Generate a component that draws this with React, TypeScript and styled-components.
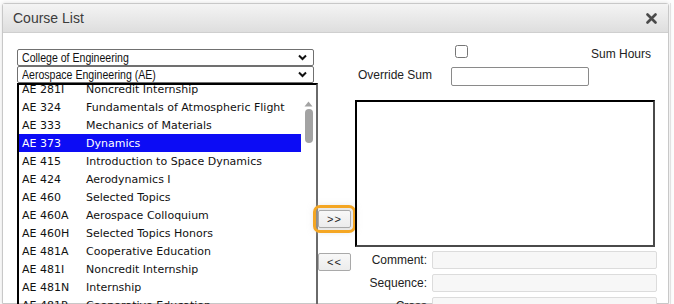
import React from 'react';
import styled, { createGlobalStyle } from 'styled-components';

const GlobalStyle = createGlobalStyle`
  html, body {
    margin: 0;
    padding: 0;
    background: #ffffff;
    overflow: hidden;
  }
`;

interface Course {
  code: string;
  name: string;
}

const courses: Course[] = [
  { code: 'AE 281I', name: 'Noncredit Internship' },
  { code: 'AE 324', name: 'Fundamentals of Atmospheric Flight' },
  { code: 'AE 333', name: 'Mechanics of Materials' },
  { code: 'AE 373', name: 'Dynamics' },
  { code: 'AE 415', name: 'Introduction to Space Dynamics' },
  { code: 'AE 424', name: 'Aerodynamics I' },
  { code: 'AE 460', name: 'Selected Topics' },
  { code: 'AE 460A', name: 'Aerospace Colloquium' },
  { code: 'AE 460H', name: 'Selected Topics Honors' },
  { code: 'AE 481A', name: 'Cooperative Education' },
  { code: 'AE 481I', name: 'Noncredit Internship' },
  { code: 'AE 481N', name: 'Internship' },
  { code: 'AE 481P', name: 'Cooperative Education' },
];

const selected = 'AE 373';

const Chevron = () => (
  <svg width="9" height="7" viewBox="0 0 9 7">
    <polyline points="1,1.5 4.5,5 8,1.5" fill="none" stroke="#111" strokeWidth="2" />
  </svg>
);

const CloseIcon = () => (
  <svg width="11" height="11" viewBox="0 0 11 11">
    <path d="M1.5 1.5 L9.5 9.5 M9.5 1.5 L1.5 9.5" stroke="#4a4a4a" strokeWidth="2.6" strokeLinecap="round" />
  </svg>
);

export default function App() {
  return (
    <>
      <GlobalStyle />
      <Page>
        <Dialog>
          <TitleBar>
            <Title>Course List</Title>
            <CloseIcon />
          </TitleBar>
          <Body>
            <LeftCol>
              <Select>
                <SelectText>College of Engineering</SelectText>
                <Chevron />
              </Select>
              <Select>
                <SelectText>Aerospace Engineering (AE)</SelectText>
                <Chevron />
              </Select>
              <ListBox>
                <Rows>
                  <RowsInner>
                    {courses.map(c => (
                      <Row key={c.code} active={c.code === selected}>
                        <Code>{c.code}</Code>
                        <span>{c.name}</span>
                      </Row>
                    ))}
                  </RowsInner>
                </Rows>
                <ScrollTrack>
                  <svg width="9" height="6" viewBox="0 0 9 6">
                    <polygon points="0.5,5.5 4.5,0.5 8.5,5.5" fill="#a3a3a3" />
                  </svg>
                  <Thumb />
                </ScrollTrack>
              </ListBox>
            </LeftCol>

            <MidCol>
              <MoveButton focused>&gt;&gt;</MoveButton>
              <MoveButton>&lt;&lt;</MoveButton>
            </MidCol>

            <RightCol>
              <TopGrid>
                <span />
                <Check type="checkbox" />
                <SumLabel>Sum Hours</SumLabel>
                <Label>Override Sum</Label>
                <SumInput />
                <span />
              </TopGrid>
              <PickedBox />
              <Fields>
                <FieldLabel>Comment:</FieldLabel>
                <FieldInput />
                <FieldLabel>Sequence:</FieldLabel>
                <FieldInput />
                <FieldLabel>Cross</FieldLabel>
                <FieldInput />
              </Fields>
            </RightCol>
          </Body>
        </Dialog>
        <Backdrop />
      </Page>
    </>
  );
}

const Page = styled.div`
  width: 674px;
  height: 304px;
  display: flex;
  padding: 3px 0 0 2px;
  box-sizing: border-box;
  overflow: hidden;
  background: #fdfdfd;
`;

const Backdrop = styled.div`
  flex: 1;
  border-left: 1px solid #e2e2e2;
  margin-left: 1px;
`;

const Dialog = styled.div`
  width: 665px;
  flex-shrink: 0;
  border: 1px solid #c8c8c8;
  border-radius: 3px 3px 0 0;
  background: #fff;
  box-shadow: 0 0 4px rgba(0, 0, 0, 0.12);
  display: flex;
  flex-direction: column;
`;

const TitleBar = styled.div`
  height: 28px;
  flex-shrink: 0;
  display: flex;
  align-items: center;
  justify-content: space-between;
  padding: 0 11px 0 10px;
  background: linear-gradient(#f4f4f4, #dedede);
  border-bottom: 1px solid #cfcfcf;
`;

const Title = styled.div`
  font-family: 'Liberation Sans', Arial, sans-serif;
  font-size: 14px;
  color: #3c3c3c;
`;

const Body = styled.div`
  display: flex;
  align-items: flex-start;
  flex-shrink: 0;
  padding: 12px 0 0 14px;
`;

const LeftCol = styled.div`
  width: 301px;
  padding-top: 4px;
  display: flex;
  flex-direction: column;
`;

const Select = styled.div`
  width: 297px;
  height: 17px;
  box-sizing: border-box;
  border: 1px solid #707070;
  border-radius: 2px;
  display: flex;
  align-items: center;
  justify-content: space-between;
  padding: 0 6px 0 4px;
  font-family: 'Liberation Sans', Arial, sans-serif;
  font-size: 12px;
  color: #111;
`;

const SelectText = styled.span`
  display: inline-block;
  transform: scaleX(0.88);
  transform-origin: left center;
  white-space: nowrap;
`;

const ListBox = styled.div`
  width: 301px;
  height: 240px;
  box-sizing: border-box;
  border-style: solid;
  border-width: 2px;
  border-color: #000 #6a6a6a #6a6a6a #000;
  display: flex;
`;

const Rows = styled.div`
  flex: 1;
  overflow: hidden;
`;

const RowsInner = styled.div`
  margin-top: -5px;
`;

const Row = styled.div<{ active?: boolean }>`
  height: 18px;
  display: flex;
  align-items: center;
  padding-left: 3px;
  font-family: 'DejaVu Sans', Verdana, sans-serif;
  font-size: 11px;
  color: ${p => (p.active ? '#fff' : '#111')};
  background: ${p => (p.active ? '#0c0cf5' : 'transparent')};
  white-space: nowrap;
`;

const Code = styled.span`
  width: 64px;
  flex-shrink: 0;
`;

const ScrollTrack = styled.div`
  width: 15px;
  display: flex;
  flex-direction: column;
  align-items: center;
  padding-top: 16px;
  gap: 2px;
`;

const Thumb = styled.div`
  width: 8px;
  height: 34px;
  border-radius: 4px;
  background: #a3a3a3;
`;

const MidCol = styled.div`
  width: 37px;
  flex-shrink: 0;
  display: flex;
  flex-direction: column;
  align-items: flex-start;
  padding-top: 165px;
  gap: 25px;
`;

const MoveButton = styled.button<{ focused?: boolean }>`
  width: 33px;
  height: 18px;
  padding: 0;
  border: 1px solid #a9a9a9;
  border-radius: 2px;
  background: linear-gradient(#f8f8f8, #ececec);
  font-family: 'Liberation Sans', Arial, sans-serif;
  font-size: 11px;
  letter-spacing: 1px;
  color: #222;
  outline: ${p => (p.focused ? '3px solid #f4a623' : 'none')};
  outline-offset: 2px;
  box-shadow: ${p => (p.focused ? '0 0 6px 4px rgba(200, 200, 200, 0.5)' : 'none')};
`;

const RightCol = styled.div`
  width: 302px;
  display: flex;
  flex-direction: column;
`;

const TopGrid = styled.div`
  display: grid;
  grid-template-columns: 96px 140px 1fr;
  grid-template-rows: 20px 20px;
  align-items: center;
  font-family: 'Liberation Sans', Arial, sans-serif;
  font-size: 12px;
  color: #222;
  padding-right: 6px;
`;

const Check = styled.input`
  width: 13px;
  height: 13px;
  margin: 0 0 0 4px;
  align-self: start;
`;

const SumLabel = styled.span`
  justify-self: end;
  align-self: end;
  padding-bottom: 4px;
  white-space: nowrap;
`;

const Label = styled.span`
  padding-left: 3px;
  white-space: nowrap;
`;

const SumInput = styled.div`
  width: 138px;
  height: 19px;
  box-sizing: border-box;
  border: 1px solid #8a8a8a;
  border-radius: 2px;
  margin-top: 2px;
`;

const PickedBox = styled.div`
  width: 300px;
  height: 147px;
  box-sizing: border-box;
  margin-top: 15px;
  border-style: solid;
  border-width: 2px;
  border-color: #000 #4a4a4a #4a4a4a #000;
`;

const Fields = styled.div`
  display: grid;
  grid-template-columns: 72px 225px;
  column-gap: 5px;
  row-gap: 5px;
  margin-top: 4px;
  align-items: center;
`;

const FieldLabel = styled.span`
  text-align: right;
  font-family: 'Liberation Sans', Arial, sans-serif;
  font-size: 12px;
  color: #222;
`;

const FieldInput = styled.div`
  height: 18px;
  box-sizing: border-box;
  border: 1px solid #dcdcdc;
  border-radius: 2px;
  background: #f7f7f7;
`;
